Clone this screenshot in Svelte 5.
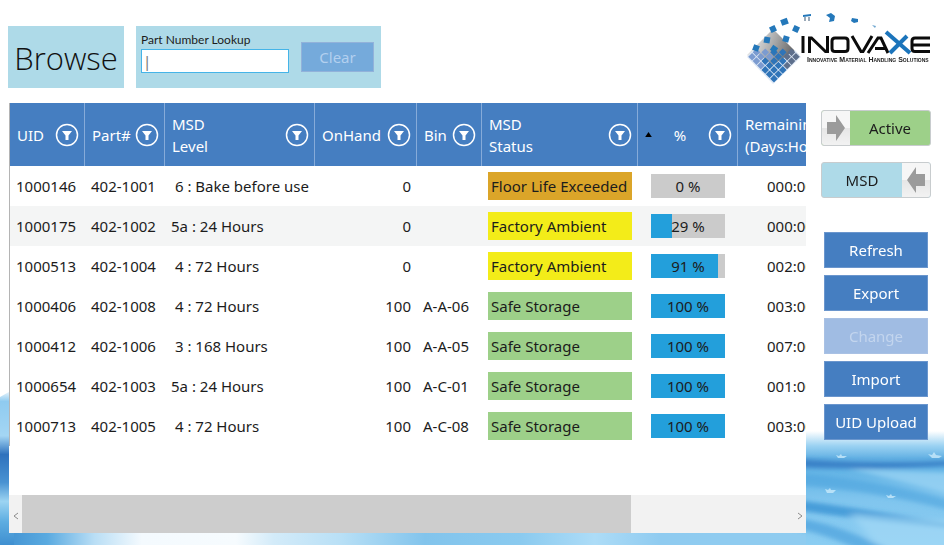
<script lang="ts">
  type Row = {
    uid: string;
    part: string;
    level: string;
    onHand: number;
    bin: string;
    status: string;
    percent: number;
    remaining: string;
  };

  const rows: Row[] = [
    { uid: '1000146', part: '402-1001', level: ' 6 : Bake before use', onHand: 0, bin: '', status: 'Floor Life Exceeded', percent: 0, remaining: '000:00' },
    { uid: '1000175', part: '402-1002', level: '5a : 24 Hours', onHand: 0, bin: '', status: 'Factory Ambient', percent: 29, remaining: '000:00' },
    { uid: '1000513', part: '402-1004', level: ' 4 : 72 Hours', onHand: 0, bin: '', status: 'Factory Ambient', percent: 91, remaining: '002:00' },
    { uid: '1000406', part: '402-1008', level: ' 4 : 72 Hours', onHand: 100, bin: 'A-A-06', status: 'Safe Storage', percent: 100, remaining: '003:00' },
    { uid: '1000412', part: '402-1006', level: ' 3 : 168 Hours', onHand: 100, bin: 'A-A-05', status: 'Safe Storage', percent: 100, remaining: '007:00' },
    { uid: '1000654', part: '402-1003', level: '5a : 24 Hours', onHand: 100, bin: 'A-C-01', status: 'Safe Storage', percent: 100, remaining: '001:00' },
    { uid: '1000713', part: '402-1005', level: ' 4 : 72 Hours', onHand: 100, bin: 'A-C-08', status: 'Safe Storage', percent: 100, remaining: '003:00' }
  ];

  const columns = [
    { key: 'uid', label: 'UID' },
    { key: 'part', label: 'Part#' },
    { key: 'level', label: 'MSD\nLevel' },
    { key: 'onhand', label: 'OnHand' },
    { key: 'bin', label: 'Bin' },
    { key: 'msd-status', label: 'MSD\nStatus' },
    { key: 'percent', label: '%' },
    { key: 'remaining', label: 'Remaining\n(Days:Hours)' }
  ];

  const statusClass: Record<string, string> = {
    'Floor Life Exceeded': 'exceeded',
    'Factory Ambient': 'ambient',
    'Safe Storage': 'safe'
  };

  const actions = ['Refresh', 'Export', 'Change', 'Import', 'UID Upload'];

  // small squares of the logo diamond, laid out on a rotated grid
  const tiles: { x: number; y: number; c: string }[] = [];
  for (let r = 0; r < 6; r++) {
    for (let c = 0; c < 6; c++) {
      if (r + c < 4) continue;
      tiles.push({ x: c * 6.2, y: r * 6.2, c: r - c > 2 || (r + c < 6 && r > c) ? '#7b9bd0' : c - r > 2 ? '#5d6f8c' : '#2f74b8' });
    }
  }

  let lookup = $state('');
</script>

<svg class="waves" viewBox="0 0 944 160" preserveAspectRatio="none" aria-hidden="true">
  <defs>
    <linearGradient id="floor" x1="0" x2="1" y1="0" y2="0">
      <stop offset="0" stop-color="#3f8fd0" />
      <stop offset="0.05" stop-color="#5aaae0" />
      <stop offset="0.1" stop-color="#b9def5" />
      <stop offset="0.15" stop-color="#f4fafe" />
      <stop offset="0.25" stop-color="#f6fbfe" />
      <stop offset="0.29" stop-color="#d3ebf9" />
      <stop offset="0.36" stop-color="#b9e0f6" />
      <stop offset="0.45" stop-color="#82c4ec" />
      <stop offset="0.55" stop-color="#8acaef" />
      <stop offset="0.63" stop-color="#addcf7" />
      <stop offset="0.7" stop-color="#8fcbf0" />
      <stop offset="0.86" stop-color="#8fccf0" />
      <stop offset="1" stop-color="#96d0f3" />
    </linearGradient>
    <linearGradient id="left" x1="0" x2="0" y1="0" y2="1">
      <stop offset="0" stop-color="#ffffff" />
      <stop offset="0.08" stop-color="#8fcbf0" />
      <stop offset="0.3" stop-color="#a4d6f4" />
      <stop offset="0.42" stop-color="#2f72bd" />
      <stop offset="0.6" stop-color="#4a93d2" />
      <stop offset="0.72" stop-color="#9cd4f2" />
      <stop offset="0.85" stop-color="#5dade1" />
      <stop offset="1" stop-color="#3f8fd0" />
    </linearGradient>
    <linearGradient id="right" x1="0" x2="0" y1="0" y2="1">
      <stop offset="0" stop-color="#ffffff" />
      <stop offset="0.13" stop-color="#9bd2f2" />
      <stop offset="0.24" stop-color="#62b0e3" />
      <stop offset="0.34" stop-color="#62b3e5" />
      <stop offset="0.6" stop-color="#80c5ee" />
      <stop offset="1" stop-color="#8bcdf2" />
    </linearGradient>
    <filter id="soft" x="-10%" y="-50%" width="120%" height="200%">
      <feGaussianBlur stdDeviation="4 2" />
    </filter>
  </defs>
  <rect x="0" y="140" width="944" height="20" fill="url(#floor)" />
  <path d="M0 12 L14 4 V160 H0 Z" fill="url(#left)" />
  <rect x="806" y="46" width="138" height="114" fill="url(#right)" />
  <g filter="url(#soft)">
    <path d="M790 73 Q870 80 960 75 V80 Q870 86 790 82 Z" fill="#3a82c8" />
    <path d="M790 88 Q870 92 960 118 V128 Q870 104 790 100 Z" fill="#4ca3de" opacity="0.6" />
    <path d="M850 84 Q910 86 960 88 V112 Q900 96 850 84 Z" fill="#a6dbf7" opacity="0.6" />
    <path d="M790 114 Q850 122 960 140 V144 Q850 134 790 124 Z" fill="#2f8bd0" opacity="0.7" />
    <path d="M850 128 Q910 134 960 136 V166 H880 Z" fill="#a6dbf7" opacity="0.6" />
    <path d="M790 132 Q840 138 890 166 H860 Q830 150 790 142 Z" fill="#3f9ad8" opacity="0.6" />
  </g>
  <g fill="#c9eafb" opacity="0.8">
    <path d="M836 70 l3 1 2 -2 1 2 5 0 -3 2 -6 0z" />
    <path d="M928 69 l4 1 2 -3 2 3 6 1 -3 2 -7 0z" />
    <path d="M825 104 l3 1 2 -2 1 2 5 0 -3 3 -6 0z" />
    <path d="M886 110 l3 1 2 -2 1 2 4 0 -3 2 -5 0z" />
  </g>
</svg>

<div class="page">
  <header>
    <h1>Browse</h1>
    <div class="lookup">
      <div class="field">
        <label for="part-lookup">Part Number Lookup</label>
        <input id="part-lookup" type="text" placeholder="|" bind:value={lookup} />
      </div>
      <button class="clear" disabled={!lookup} onclick={() => (lookup = '')}>Clear</button>
    </div>

    <svg class="logo" viewBox="0 0 188 76" role="img" aria-label="Inovaxe">
      <defs>
        <linearGradient id="shade" x1="0" x2="1" y1="0.2" y2="0.6">
          <stop offset="0" stop-color="#f4f4f4" />
          <stop offset="0.5" stop-color="#a4a4a4" />
          <stop offset="1" stop-color="#4c4c4c" />
        </linearGradient>
        <linearGradient id="rule" x1="0" x2="1">
          <stop offset="0" stop-color="#333333" />
          <stop offset="1" stop-color="#bbbbbb" />
        </linearGradient>
      </defs>
      <path d="M30 19 L56 45 L30 71 L4 45 Z" fill="url(#shade)" />
      <path d="M4 47 L30 74 L58 47 L52 40 L30 55 L10 40 Z" fill="#dfe9f6" />
      <g transform="translate(31 21) rotate(45)">
        {#each tiles as t}
          <rect x={t.x} y={t.y} width="5.400" height="5.400" fill={t.c} />
        {/each}
      </g>
      <g fill="#2478ba">
        <rect x="10" y="35" width="6" height="6" transform="rotate(20 13 38)" />
        <rect x="21" y="27" width="6" height="6" transform="rotate(10 24 30)" />
        <rect x="28" y="36" width="6" height="6" transform="rotate(35 31 39)" />
        <rect x="40" y="26" width="6" height="6" transform="rotate(15 43 29)" />
        <rect x="27" y="16" width="6" height="6" transform="rotate(-25 30 19)" />
        <rect x="38" y="9" width="7" height="6" transform="rotate(-20 41 12)" />
        <rect x="50" y="16" width="6" height="6" transform="rotate(25 53 19)" />
        <path d="M60 5l8 -1v2l-8 1z" />
        <path d="M61 7h2v4h-2zM65 7h2v4h-2z" fill="#9aa9b8" />
        <path d="M83 5l5 -2 4 3 -1 5 -5 1 1 -4z" />
        <path d="M109 8l6 1 0 3 -4 1 -3 -2z" />
        <path d="M129 15l4 1 -1 2z" fill="#6ea6d0" />
      </g>
      <g transform="translate(2 0)">
        <g fill="none" stroke="#0b0b0b" stroke-width="3">
          <path d="M58 26v17" />
          <path d="M64.500 43V28h2l14 13.500h2V26" />
          <path d="M90 28h10q3 0 3 3v7.500q0 3 -3 3h-10q-3 0 -3 -3v-7.500q0 -3 3 -3z" />
          <path d="M107 26l9 15.500h2l9 -15.500" />
          <path d="M123 43l10 -15h3l7 15M130 38.500h10" />
          <path d="M185 28h-15q-3 0 -3 3v7.500q0 3 3 3h15M168 35h17" />
        </g>
        <path d="M141 22l24 21M162 26l-17 17" fill="none" stroke="#1b74bb" stroke-width="4" />
        <path d="M57 46h128" stroke="url(#rule)" stroke-width="1" />
      </g>
      <text x="64" y="52" class="tagline">Innovative Material Handling Solutions</text>
    </svg>
  </header>

  <main>
    <section class="grid">
      <div class="viewport">
        <table>
          <colgroup>
            {#each columns as col}
              <col class={col.key} />
            {/each}
          </colgroup>
          <thead>
            <tr>
              {#each columns as col}
                <th scope="col">
                  <div class="head">
                    {#if col.key === 'percent'}
                      <svg class="sort" viewBox="0 0 8 6" aria-hidden="true"><path d="M4 0l4 6H0z" /></svg>
                    {/if}
                    <span>{col.label}</span>
                    {#if col.key !== 'remaining'}
                      <button class="filter" aria-label="Filter {col.key}">
                        <svg viewBox="0 0 24 24" aria-hidden="true">
                          <circle cx="12" cy="12" r="10.500" />
                          <path d="M7 8h10l-3.500 4.500v4.500h-3v-4.500z" />
                        </svg>
                      </button>
                    {/if}
                  </div>
                </th>
              {/each}
            </tr>
          </thead>
          <tbody>
            {#each rows as row, i}
              <tr class:hovered={i === 1}>
                <td>{row.uid}</td>
                <td>{row.part}</td>
                <td class="level">{row.level}</td>
                <td class="number">{row.onHand}</td>
                <td>{row.bin}</td>
                <td><div class="status {statusClass[row.status]}">{row.status}</div></td>
                <td>
                  <div class="bar">
                    <div class="fill" style="width: {row.percent}%"></div>
                    <span>{row.percent} %</span>
                  </div>
                </td>
                <td class="remaining">{row.remaining}</td>
              </tr>
            {/each}
          </tbody>
        </table>
      </div>
      <div class="scrollbar">
        <button aria-label="Scroll left"><svg viewBox="0 0 6 8"><path d="M5 1L1 4l4 3" /></svg></button>
        <div class="track"><div class="thumb"></div></div>
        <button aria-label="Scroll right"><svg viewBox="0 0 6 8"><path d="M1 1l4 3-4 3" /></svg></button>
      </div>
    </section>

    <aside>
      <button class="toggle active">
        <span class="knob"><svg viewBox="0 0 20 26"><path d="M1 7h9V0l9 13-9 13v-7H1z" /></svg></span>
        <span class="name">Active</span>
      </button>
      <button class="toggle msd">
        <span class="name">MSD</span>
        <span class="knob"><svg viewBox="0 0 20 26"><path d="M19 7h-9V0L1 13l9 13v-7h9z" /></svg></span>
      </button>
      <nav>
        {#each actions as action}
          <button class="action" disabled={action === 'Change'}>{action}</button>
        {/each}
      </nav>
    </aside>
  </main>
</div>

<style>
  :global(body) {
    background: #fff;
  }

  .page,
  .page button,
  .page input {
    font-family: 'Noto Sans', 'Open Sans', sans-serif;
    font-size: 15px;
    color: #1c1c1c;
  }

  .page {
    position: relative;
    box-sizing: border-box;
    min-height: 100vh;
    padding: 10px 13px 12px 9px;
    display: flex;
    flex-direction: column;
    gap: 13px;
  }

  .waves {
    position: fixed;
    left: 0;
    bottom: 0;
    width: 100%;
    height: 160px;
  }

  button {
    border: none;
    padding: 0;
    cursor: pointer;
  }

  /* top bar */
  header {
    display: flex;
    gap: 12px;
    height: 80px;
    margin-left: -1px;
  }

  h1 {
    box-sizing: border-box;
    width: 116px;
    height: 62px;
    margin: 16px 0 0;
    background: #aedae8;
    font-family: 'Open Sans', 'Noto Sans', sans-serif;
    font-size: 31px;
    font-weight: 300;
    line-height: 64px;
    text-align: center;
    color: #111;
  }

  .lookup {
    box-sizing: border-box;
    width: 245px;
    height: 62px;
    margin-top: 16px;
    padding: 4px 7px 0 5px;
    display: flex;
    justify-content: space-between;
    background: #aedae8;
  }

  .field {
    display: flex;
    flex-direction: column;
    width: 148px;
  }

  .field label {
    font-family: Lato, sans-serif;
    font-size: 12px;
    line-height: 19px;
  }

  .page .field input {
    box-sizing: border-box;
    width: 100%;
    height: 24px;
    padding: 0 1px;
    border: 1px solid #45b4e8;
    background: #fff;
    outline: none;
  }

  .page .field input::placeholder {
    color: #777;
  }

  .page .clear {
    width: 73px;
    height: 30px;
    margin-top: 12px;
    border: 1px solid #92b2da;
    background: #75aadb;
    color: #b3d0ef;
  }

  .logo {
    width: 188px;
    height: 76px;
    margin-left: auto;
  }

  .tagline {
    font: 700 7px 'Liberation Sans', sans-serif;
    font-variant: small-caps;
    fill: #222;
  }

  /* grid */
  main {
    flex: 1;
    display: flex;
    gap: 15px;
  }

  .grid {
    flex: 1;
    min-width: 0;
    display: flex;
    flex-direction: column;
    justify-content: space-between;
    background: #fff;
  }

  .viewport {
    overflow: hidden;
    border-left: 1px solid #b4b4b4;
  }

  table {
    width: 880px;
    table-layout: fixed;
    border-collapse: collapse;
  }

  col.uid { width: 75px; }
  col.part { width: 80px; }
  col.level { width: 150px; }
  col.onhand { width: 102px; }
  col.bin { width: 65px; }
  col.msd-status { width: 156px; }
  col.percent { width: 100px; }
  col.remaining { width: 152px; }

  th {
    height: 63px;
    padding: 0;
    background: #457ec1;
    box-shadow: inset -1px 0 #86abd9;
    font-weight: 400;
    text-align: left;
    color: #fff;
  }

  .head {
    display: flex;
    align-items: center;
    justify-content: space-between;
    padding: 0 6px 0 7px;
    line-height: 22px;
    white-space: pre;
  }

  .sort {
    width: 7px;
    height: 5px;
  }

  .filter {
    width: 24px;
    height: 24px;
    background: none;
  }

  .filter svg {
    display: block;
  }

  .filter circle {
    fill: none;
    stroke: #fff;
    stroke-width: 1.5;
  }

  .filter path {
    fill: #fff;
  }

  td {
    height: 40px;
    padding: 0 6px;
    white-space: nowrap;
  }

  tr.hovered {
    background: #f4f5f5;
  }

  td.level {
    white-space: pre;
  }

  td.number {
    text-align: right;
  }

  td.remaining {
    padding-left: 29px;
  }

  .status {
    height: 28px;
    padding-left: 3px;
    line-height: 28px;
  }

  .exceeded { background: #dba529; }
  .ambient { background: #f3ec19; }
  .safe { background: #9dd089; }

  .bar {
    display: grid;
    height: 24px;
    margin: 0 7px;
    background: #cbcbcb;
    line-height: 24px;
    text-align: center;
  }

  .bar > * {
    grid-area: 1 / 1;
  }

  .fill {
    background: #239fdb;
  }

  .scrollbar {
    display: flex;
    height: 38px;
    background: #f2f2f2;
  }

  .scrollbar button {
    width: 13px;
    background: none;
  }

  .scrollbar svg {
    width: 6px;
    height: 8px;
    fill: none;
    stroke: #8c8c8c;
  }

  .track {
    flex: 1;
  }

  .thumb {
    width: 79%;
    height: 100%;
    background: #cdcdcd;
  }

  /* right hand controls */
  aside {
    width: 110px;
    padding-top: 7px;
    display: flex;
    flex-direction: column;
    gap: 16px;
  }

  .toggle {
    display: flex;
    height: 36px;
    border: 1px solid #c8ccce;
    border-radius: 3px;
    overflow: hidden;
  }

  .toggle .name {
    flex: 1;
    align-self: stretch;
    line-height: 34px;
  }

  .toggle.active { background: #9dd089; }
  .toggle.msd { background: #aedae8; }

  .knob {
    width: 28px;
    height: 34px;
    display: flex;
    align-items: center;
    justify-content: center;
    background: linear-gradient(#f6f6f6 50%, #e6e6e6 50%, #f2f2f2);
  }

  .knob svg {
    width: 20px;
    height: 26px;
    fill: #9b9b9b;
  }

  nav {
    display: flex;
    flex-direction: column;
    gap: 7px;
    padding: 18px 3px 0;
  }

  .page .action {
    height: 36px;
    border: 1px solid #6b96cd;
    background: #457ec1;
    color: #fff;
  }

  .page .action:disabled {
    border-color: #a9c1e4;
    background: #a0bce3;
    color: #c3d5ee;
  }
</style>
